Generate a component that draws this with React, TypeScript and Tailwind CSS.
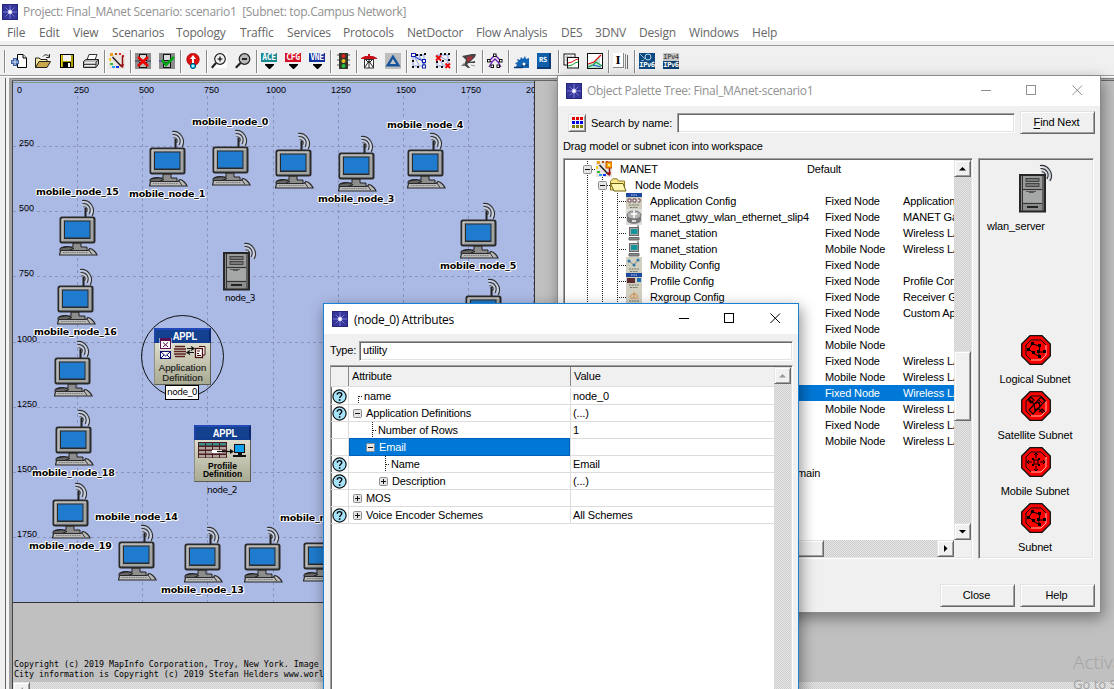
import React from 'react';

const SANS = "font-['Liberation_Sans',sans-serif] tracking-[-0.14px]";
const UI = "font-['Open_Sans','Noto_Sans',sans-serif]";
const DITHER = 'bg-[repeating-conic-gradient(#cdcdcd_0_25%,#e6e6e6_0_50%)] bg-[length:2px_2px]';
const RAISED = 'border border-t-[#e3e3e3] border-l-[#e3e3e3] border-r-[#696969] border-b-[#696969] bg-[#f0f0f0] shadow-[inset_1px_1px_0_#fff,inset_-1px_-1px_0_#a0a0a0]';
const SUNKEN = 'border border-t-[#a0a0a0] border-l-[#a0a0a0] border-r-white border-b-white shadow-[inset_1px_1px_0_#696969,inset_-1px_-1px_0_#e3e3e3]';

function AppIcon() {
  return (
    <svg width="16" height="16" viewBox="0 0 16 16" className="shrink-0">
      <rect width="16" height="16" fill="#26267c" />
      <rect x="1" y="1" width="14" height="14" fill="#35359a" />
      <path d="M8 1V15M1 8H15" stroke="#7d7dd0" strokeWidth="1" />
      <path d="M3.500 3.500L12.500 12.500M12.500 3.500L3.500 12.500" stroke="#7878c4" strokeWidth="1" />
      <circle cx="8" cy="8" r="2.400" fill="#b9b9f0" />
      <circle cx="8" cy="8" r="1.500" fill="#fff" />
    </svg>
  );
}

/* ---------- toolbar ---------- */
const toolIcons: Record<string, React.ReactNode> = {
  new: (
    <>
      <path d="M6.500 1.500H12L15.500 5V14.500H6.500Z" fill="#fff" stroke="#000" />
      <path d="M12 1.500V5H15.500" fill="#ddd" stroke="#000" />
      <path d="M2 5H6V7H8V11H6V13H2V11H0V7H2Z" fill="#3c64a8" />
      <path d="M4 6V12M1 9H7" stroke="#dfe8f8" strokeWidth="1" />
    </>
  ),
  open: (
    <>
      <path d="M.5 14.500V5H4L6 6.500H12V8" fill="#f8eca0" stroke="#222" />
      <path d="M.5 14.500L4 8.500H15.500L12 14.500Z" fill="#c8a848" stroke="#222" />
      <path d="M8 3.500C10 1 12 1.500 14 3.500M14.500 1V4.500H11" fill="none" stroke="#222" />
    </>
  ),
  save: (
    <>
      <rect x="1.500" y="1.500" width="13" height="13" fill="#b0a400" stroke="#000" />
      <rect x="4" y="2" width="8" height="6" fill="#f4f4f4" />
      <rect x="4" y="9" width="8" height="6" fill="#000" />
      <rect x="9" y="10" width="2" height="4" fill="#fff" />
      <path d="M2.500 2V14" stroke="#e6d800" />
    </>
  ),
  print: (
    <>
      <path d="M4 7L6 1.500H14L12 7Z" fill="#fff" stroke="#333" />
      <path d="M.5 8.500L3 6.500H15.500V11L13 14.500H.5Z" fill="#b8b8b8" stroke="#222" />
      <path d="M1 11.500H13M13 14V9L15 7" stroke="#444" fill="none" />
      <rect x="2" y="9" width="10" height="1" fill="#eee" />
      <rect x="2" y="12" width="10" height="1" fill="#eee" />
    </>
  ),
  dots: (
    <>
      <rect width="16" height="16" fill="#ece4e0" />
      <rect x="1" y="0" width="3" height="3" fill="#f0a020" /><rect x="6" y="0" width="2" height="2" fill="#a05000" />
      <rect x="10" y="0" width="2" height="2" fill="#e03020" /><rect x="13" y="2" width="2" height="2" fill="#c02020" /><rect x="0" y="5" width="2" height="3" fill="#f8d020" />
      <rect x="1" y="10" width="3" height="2" fill="#30c030" /><rect x="3" y="13" width="3" height="2" fill="#20a0f0" />
      <rect x="7" y="13" width="3" height="2" fill="#1030f0" />
      <path d="M3.500 4L13 14" stroke="#222" strokeWidth="1.500" /><path d="M13.500 3V12" stroke="#901010" strokeWidth="1.500" /><path d="M10 12L15 11L14 15Z" fill="#a01010" />
    </>
  ),
  fail: (
    <>
      <rect width="16" height="16" fill="#8c8c8c" />
      <path d="M0 8H4M12 8H16" stroke="#335" />
      <rect x="4.500" y="1.500" width="7" height="6" fill="#ddd" stroke="#111" /><rect x="4.500" y="9.500" width="7" height="5" fill="#bbb" stroke="#111" />
      <path d="M3 4L13 13M13 4L3 13" stroke="#f00000" strokeWidth="2.500" />
    </>
  ),
  ok: (
    <>
      <rect width="16" height="16" fill="#8c8c8c" />
      <path d="M0 8H4" stroke="#22c" />
      <rect x="4.500" y="1.500" width="7" height="6" fill="#ddd" stroke="#111" /><rect x="4.500" y="9.500" width="7" height="5" fill="#bbb" stroke="#111" />
      <path d="M3 7L7 12L15 4" fill="none" stroke="#00a818" strokeWidth="2.600" />
    </>
  ),
  up: (
    <>
      <circle cx="8" cy="6.500" r="6.300" fill="#dc1010" stroke="#900" strokeWidth=".6" />
      <path d="M8 2L11 6H9V10H7V6H5Z" fill="#fff" />
      <circle cx="8" cy="13" r="2.600" fill="#18c8f0" stroke="#064b7a" />
      <circle cx="8" cy="13" r="1" fill="#fff" />
    </>
  ),
  zin: (
    <>
      <rect x="3" y="0" width="13" height="15" fill="#fff" />
      <circle cx="9" cy="6" r="5.300" fill="#f2f2f2" stroke="#222" strokeWidth="1.200" />
      <path d="M6.500 6H11.500M9 3.500V8.500" stroke="#000" strokeWidth="1.200" />
      <path d="M5 10L.8 14.800" stroke="#222" strokeWidth="2.200" />
    </>
  ),
  zout: (
    <>
      <circle cx="9.500" cy="6" r="5.300" fill="#b8b8b8" stroke="#222" strokeWidth="1.200" />
      <path d="M7 6H12" stroke="#000" strokeWidth="1.600" />
      <path d="M5.500 10L.8 14.800" stroke="#222" strokeWidth="2.200" />
    </>
  ),
  light: (
    <>
      <rect x="4" y="0" width="9" height="16" fill="#35352c" />
      <path d="M2 2H4M2 7H4M2 12H4M13 2H15M13 7H15M13 12H15" stroke="#555" />
      <circle cx="8.500" cy="3" r="2" fill="#e02020" /><circle cx="8.500" cy="8" r="2" fill="#e8c020" /><circle cx="8.500" cy="13" r="2" fill="#20c040" />
    </>
  ),
  tent: (
    <>
      <path d="M0 5L4 3H7V1H9V3H12L16 5V6H0Z" fill="#c80f1c" />
      <rect x="3.500" y="6.500" width="9" height="8.500" fill="#fff" stroke="#333" />
      <path d="M4 14L8 8L12 14M8 6V15" stroke="#222" fill="none" />
      <path d="M5 7L8 10L11 7" stroke="#222" fill="none" />
    </>
  ),
  delta: (
    <>
      <rect width="16" height="16" fill="#bdbdbd" />
      <path d="M8 1.500L15.500 13.500H.5Z" fill="#16549c" /><path d="M8 6L11 11H5Z" fill="#c8c8c8" />
    </>
  ),
  net: (
    <>
      <path d="M2 2H13V13H2V2M2 2L13 8M3 3L8 12M8 2L13 13" fill="none" stroke="#8aa2e8" />
      <path d="M2 2L7 6L13 8V13" stroke="#1b2fc0" fill="none" />
      {[[5, 1], [9, 1], [13, 0], [1, 7], [1, 13], [6, 13]].map(([x, y]) => <rect key={x + '-' + y} x={x} y={y} width="2" height="2" fill="#111" />)}
      <rect x=".5" y=".5" width="4" height="3" fill="#fff" stroke="#1020b0" /><rect x="11.500" y="6.500" width="3" height="3" fill="#fff" stroke="#1020b0" /><rect x="11.500" y="12" width="3" height="3" fill="#fff" stroke="#1020b0" />
    </>
  ),
  netx: (
    <>
      <path d="M2 2H13V13H2V2M2 2L13 8M3 3L8 12" fill="none" stroke="#8aa2e8" />
      {[[5, 0], [9, 0], [13, 0], [1, 8], [7, 7], [13, 6], [1, 13], [6, 13]].map(([x, y]) => <rect key={x + '-' + y} x={x} y={y} width="2" height="2" fill="#111" />)}
      <path d="M1 2.500L6 7.500M6 2.500L1 7.500M10.500 10.500L15 15M15 10.500L10.500 15" stroke="#f00000" strokeWidth="1.800" />
    </>
  ),
  run: (
    <>
      <path d="M1 3L6 2L11 1H15L14 4L12 6L9 9L14 8V10L8 10L6 11L9 15H7L3 12L5 7Z" fill="#444" />
      <path d="M6 4L12 3L10 7L6 9Z" fill="#a8303a" /><path d="M0 13L3 10L4 13Z" fill="#777" />
      <path d="M10 12L14 13" stroke="#999" />
    </>
  ),
  graph: (
    <>
      <path d="M8 2L2 8L5 9L2 14M8 2L14 8L11 9L14 14M5 9L8 6L11 9" stroke="#6a1bb0" strokeWidth="1.300" fill="none" />
      {[[6.500, 1], [0.500, 6.500], [12.500, 6.500], [4, 12], [10, 12]].map(([x, y]) => <rect key={x + '-' + y} x={x} y={y} width="2.500" height="2.500" fill="#fff" stroke="#111" />)}
    </>
  ),
  gear: (
    <>
      <path d="M2 15L4 12L2 10L5 9L4 6L7 7L8 4L10 6L12 3L13 6L16 5V15Z" fill="#1464b4" />
      <path d="M1 14.500H9L10 12H15" stroke="#0c3c78" strokeWidth="1.500" fill="none" />
      <circle cx="11" cy="11" r="1.500" fill="#fff" />
    </>
  ),
  charts: (
    <>
      <rect x="1" y="1" width="11" height="11" fill="#fff" stroke="#111" /><path d="M1 4H12M1 7H12M4 1V12M8 1V12" stroke="#aaa" />
      <rect x="4.500" y="4.500" width="11" height="10.500" fill="#fff" stroke="#111" />
      <path d="M5 10L9 9L12 7L15 6" stroke="#e01010" fill="none" /><path d="M5 13L9 12L12 10L15 9" stroke="#18a030" fill="none" />
    </>
  ),
  chart: (
    <>
      <rect x=".5" y=".5" width="15" height="15" fill="#fff" stroke="#111" />
      <path d="M1 11L7 9L13 2V15H1Z" fill="#b8e8dc" /><path d="M1 11L7 9L14 2" stroke="#e01010" fill="none" strokeWidth="1.300" />
      <path d="M1 14L6 12L9 9L15 13" stroke="#1ba048" fill="none" strokeWidth="1.300" /><path d="M6 12L14 14" stroke="#1b50c0" />
    </>
  ),
};

function PixelTag({ text, color }: { text: string; color: string }) {
  return (
    <div className="flex w-4 flex-col items-center">
      <div className={`h-[9px] w-4 text-center font-['DejaVu_Sans_Mono',monospace] text-[8px] leading-[9px] font-bold tracking-[-0.3px] text-white ${color}`}>{text}</div>
      <svg width="11" height="7" viewBox="0 0 11 7"><path d="M1 2H10V3L6 7H5L1 3Z" fill="#000" /></svg>
    </div>
  );
}

function Tool({ name }: { name: string }) {
  let body: React.ReactNode;
  if (name === 'ace') body = <PixelTag text="ACE" color="bg-[#178a94]" />;
  else if (name === 'cfg') body = <PixelTag text="CFG" color="bg-[#d40f26]" />;
  else if (name === 'vne') body = <PixelTag text="VNE" color="bg-[#10329c]" />;
  else if (name === 'rs')
    body = <div className="h-4 w-[14px] border-r-2 border-b-2 border-[#0a3a74] bg-[#0f5fa8] text-center font-['DejaVu_Sans_Mono',monospace] text-[7px] leading-[14px] font-bold tracking-[-0.3px] text-white">RS</div>;
  else if (name === 'pages')
    body = <div className="flex h-4 w-4"><div className="h-[15px] w-[11px] border-r border-b border-[#888] bg-white text-center font-['Liberation_Serif',serif] text-[13px] leading-[13px] font-bold text-black">I</div><div className="mt-px h-[15px] w-[2px] border-r border-[#888]" /><div className="mt-[2px] h-[14px] w-[2px] border-r border-[#666]" /></div>;
  else if (name === 'ip6')
    body = (
      <div className="flex h-4 w-4 flex-col bg-[#0d4a80]">
        <svg width="16" height="8" viewBox="0 0 16 8"><circle cx="9" cy="4" r="3" fill="none" stroke="#b8d8f0" /><path d="M1 1L6 6M5 7L2 8" stroke="#8fb8dc" /></svg>
        <span className="text-center font-['DejaVu_Sans_Mono',monospace] text-[7px] leading-[8px] font-bold tracking-[-0.4px] text-white">IPv6</span>
      </div>
    );
  else if (name === 'ip46')
    body = (
      <div className="flex h-4 w-4 flex-col text-center font-['DejaVu_Sans_Mono',monospace] text-[7px] leading-[8px] font-bold tracking-[-0.4px]">
        <span className="bg-[#c6c6c6] text-[#555]">IPv4</span>
        <span className="bg-[#0d3e6c] text-white">IPv6</span>
      </div>
    );
  else body = <svg width="16" height="16" viewBox="0 0 16 16">{toolIcons[name]}</svg>;
  return <div className="flex w-6 shrink-0 justify-start">{body}</div>;
}

const toolGroups = [
  ['dots'], ['fail', 'ok'], ['up'], ['zin', 'zout'], ['ace', 'cfg', 'vne'], ['light'], ['tent', 'delta'],
  ['net', 'netx'], ['run'], ['graph'], ['gear', 'rs'], ['charts', 'chart'], ['pages'], ['ip6', 'ip46'],
];

function ToolSep() {
  return <div className="mr-[3px] h-[23px] w-[2px] shrink-0 border-l border-[#888] bg-white" />;
}

function Toolbar() {
  return (
    <div className="flex h-[29px] items-center bg-[#f0f0f0] pt-px pl-1">
      <ToolSep />
      <div className="-mr-[1px] flex w-24 pl-[2px]">
        {['new', 'open', 'save', 'print'].map((n) => <Tool key={n} name={n} />)}
      </div>
      {toolGroups.map((g, i) => (
        <div key={i} className="-mr-[3px] flex items-center">
          <ToolSep />
          {g.map((n) => <Tool key={n} name={n} />)}
        </div>
      ))}
    </div>
  );
}

const menus: [string, string][] = [
  ['File', 'w-8'], ['Edit', 'w-[34px]'], ['View', 'w-[39px]'], ['Scenarios', 'w-16'], ['Topology', 'w-16'], ['Traffic', 'w-[47px]'],
  ['Services', 'w-14'], ['Protocols', 'w-16'], ['NetDoctor', 'w-[69px]'], ['Flow Analysis', 'w-[85px]'], ['DES', 'w-[34px]'],
  ['3DNV', 'w-11'], ['Design', 'w-[50px]'], ['Windows', 'w-[63px]'], ['Help', 'w-10'],
];

/* ---------- network canvas ---------- */
function Waves() {
  return (
    <g fill="none">
      <path d="M2 1.500C9 .5 15 8 11 16.500M2.500 5C8 4 11 9 8.500 14.500M4 8C6.500 7.500 7.500 10 6.500 13" stroke="#ccd2de" strokeWidth="2.200" />
      <path d="M2 1C10 -.3 16.500 9 12 16.500M2.500 4C8.500 3.500 12 9 9 14.500M3.500 7.200C6.800 7 8 10 6.500 12.500" stroke="#303030" strokeWidth="1.100" />
    </g>
  );
}

function Computer() {
  return (
    <svg width="40" height="58" viewBox="0 0 40 58">
      <g transform="translate(21 .5)"><Waves /></g>
      <rect x="25.500" y="9" width="2" height="9" fill="#222" />
      <path d="M14 44H22V48H28V52H10V48H14Z" fill="#8d8d8d" stroke="#222" />
      <rect x="1.500" y="18.500" width="34" height="25" rx="1.500" fill="#a3a5a4" stroke="#2a2a2a" strokeWidth="2" />
      <path d="M3 42V20H34" fill="none" stroke="#d2d2d0" />
      <rect x="5" y="21.500" width="26.500" height="18.500" fill="#2a2a2a" />
      <rect x="6" y="22.500" width="24.500" height="16" fill="#1e7bcd" />
      <path d="M1 49.500C5 46.500 11 47.500 15 49.500L10 51.500H1Z" fill="#666" stroke="#222" />
      <path d="M1.500 51.500H29L31 49.500C34 50 37 53.500 38 56H.5Z" fill="#b9b9b9" stroke="#2a2a2a" strokeWidth="1.200" />
      <path d="M4 53.500H29" stroke="#7c7c7c" strokeDasharray="1.500 .8" />
      <path d="M30 51L33 55.500" stroke="#333" />
      <path d="M2 49L10 47.500" stroke="#222" />
    </svg>
  );
}

function Server() {
  return (
    <svg width="36" height="50" viewBox="0 0 36 50">
      <g transform="translate(19 .5)"><Waves /></g>
      <rect x="1" y="11" width="25" height="36.500" fill="#8b8d8c" stroke="#262626" strokeWidth="2" />
      <path d="M3.500 12V47M24 12V47" stroke="#333" />
      <rect x="4" y="12" width="19" height="12.500" fill="#999b9a" />
      <rect x="7" y="14.500" width="13" height="3" fill="#777" stroke="#333" strokeWidth=".8" />
      <rect x="7" y="19.500" width="13" height="3" fill="#777" stroke="#333" strokeWidth=".8" />
      <path d="M4 25.500H23M4 39.500H23" stroke="#333" />
      <rect x="4" y="26.500" width="19" height="12" fill="#a6a8a7" />
      <path d="M7 27.500H17M10 28.500H15" stroke="#444" strokeWidth=".8" />
      <rect x="8" y="42" width="11" height="2" fill="#222" />
    </svg>
  );
}

function ApplIcon({ kind }: { kind: 'app' | 'profile' }) {
  return (
    <div className="flex h-[57px] w-[57px] flex-col border border-[#8e8f80] border-r-[#5c5c50] border-b-[#5c5c50] bg-linear-to-b from-[#f0efe2] to-[#a9aa92]">
      <div className="-mx-px -mt-px h-[15px] shrink-0 border-2 border-t-[#2348b8] border-r-[#0c2870] border-b-[#123c90] border-l-[#1c44a8] bg-[#13418f] pl-1 text-center font-['Liberation_Sans_Narrow','Liberation_Sans',sans-serif] text-[11.500px] leading-[12px] font-bold tracking-[-0.2px] text-white"><span className="inline-block origin-center scale-x-[0.82]">APPL</span></div>
      {kind === 'app' ? (
        <svg width="55" height="22" viewBox="0 0 55 22" className="mt-[-5px] shrink-0">
          <g stroke="#fff" strokeWidth="3"><rect x="6" y="1" width="9" height="9" /></g>
          <rect x="5.500" y=".5" width="10" height="10" fill="#fff" stroke="#5a1050" /><rect x="5" y="0" width="11" height="3" fill="#5a1050" />
          <path d="M8 4.500L13 9M13 4.500L8 9" stroke="#5a1050" />
          <rect x="5.500" y="13.500" width="10" height="7" fill="#fff" stroke="#10107a" /><path d="M6 14L10.500 18L15 14M6 20L9 17M15 20L12 17" stroke="#10107a" fill="none" />
          <path d="M20 8.500H30M19 11H31M19 13.500H31M19 16H31M20 18.500H30" stroke="#5c2020" strokeWidth="1.700" />
          <path d="M32 10.500H39M36 8.500L39 10.500L36 12.500M39 14.500H32M35 12.500L32 14.500L35 16.500" stroke="#111" strokeWidth="1.200" fill="none" />
          <path d="M44 8.500H50V17H48" stroke="#4a1010" fill="#fff" /><rect x="40.500" y="10.500" width="7" height="9" fill="#fff" stroke="#4a1010" strokeWidth="1.300" />
          <path d="M42 13H45M42 15.500H44M42 17.500H46" stroke="#4a1010" />
        </svg>
      ) : (
        <svg width="55" height="22" viewBox="0 0 55 22" className="shrink-0">
          <rect x="3" y="2" width="29" height="16" fill="#4b1f22" />
          {[0, 1, 2, 3].map((r) => [0, 1, 2, 3].map((c) => <rect key={r + '-' + c} x={4 + c * 7} y={3 + r * 4} width="6" height="2.500" fill={r === 0 ? '#3c8c8c' : '#b0a29c'} />))}
          <rect x="17" y="10" width="10" height="3" fill="#fff" />
          <path d="M22 11.500H37" stroke="#111" strokeWidth="1.300" /><path d="M35 9L39 11.500L35 14Z" fill="#111" />
          <rect x="39.500" y="4.500" width="10" height="8" fill="#10a0f0" stroke="#111" /><path d="M43 13H47V15H51V17H38V15H43Z" fill="#111" />
        </svg>
      )}
      <div className={`text-center font-['Liberation_Sans',sans-serif] whitespace-nowrap ${kind === 'app' ? 'mt-[3px] text-[9.500px] leading-[10px] tracking-[0.1px] text-[#222] [-webkit-text-stroke:0.2px_#222]' : 'text-[8.500px] leading-[8px] font-bold text-black'}`}>
        {kind === 'app' ? 'Application' : 'Profiile'}<br />Definition
      </div>
    </div>
  );
}

const computers: [number, number][] = [
  [149, 130], [212, 129], [59, 199], [57, 268], [275, 132], [338, 135], [407, 132], [460, 202], [465, 278],
  [54, 340], [55, 409], [52, 482], [118, 524], [184, 526], [244, 526], [303, 525],
];

const labels: [string, number, number][] = [
  ['mobile_node_0', 192, 122], ['mobile_node_1', 129, 194], ['mobile_node_15', 36, 192], ['mobile_node_4', 387, 125],
  ['mobile_node_3', 318, 199], ['mobile_node_5', 440, 266], ['mobile_node_16', 34, 332], ['mobile_node_18', 32, 473],
  ['mobile_node_19', 29, 546], ['mobile_node_14', 95, 517], ['mobile_node_13', 161, 590], ['mobile_node_12', 280, 518],
];

const OX = 13;
const OY = 81;

function NetworkMap() {
  return (
    <div className="relative h-[522px] w-[522px] overflow-hidden border-r border-b border-[#333] bg-[#abb9e5]">
      <svg width="522" height="521" className="absolute top-0 left-0">
        <path d="M0 1.500H522" stroke="#7d9c80" />
        {[77, 142, 207, 273, 338, 403, 468, 533].map((x) => <path key={x} d={`M${x - OX + 0.5} 15V521`} stroke="#8a94b8" strokeDasharray="3 3" />)}
        {[146, 211, 276, 342, 407, 472, 537].map((y) => <path key={y} d={`M0 ${y - OY + 0.5}H522`} stroke="#8a94b8" strokeDasharray="3 3" />)}
        <circle cx="169.500" cy="275.500" r="41" fill="none" stroke="#111" />
      </svg>
      {([['0', 17], ['250', 74], ['500', 139], ['750', 204], ['1000', 266], ['1250', 331], ['1500', 396], ['1750', 461], ['2000', 526]] as [string, number][]).map(([t, x]) => (
        <span key={t} className="absolute top-[3px] font-['Liberation_Sans',sans-serif] text-[9px] leading-[12px] text-black" style={{ left: x - OX }}>{t}</span>
      ))}
      {([['250', 143], ['500', 208], ['750', 273], ['1000', 339], ['1250', 404], ['1500', 469], ['1750', 534]] as [string, number][]).map(([t, y]) => (
        <span key={t} className="absolute font-['Liberation_Sans',sans-serif] text-[9px] leading-[12px] text-black" style={{ left: t.length > 3 ? 4 : 6, top: y - OY - 6 }}>{t}</span>
      ))}
      {computers.map(([x, y]) => (
        <div key={x} className="absolute" style={{ left: x - OX, top: y - OY }}><Computer /></div>
      ))}
      <div className="absolute top-[161px] left-[210px]"><Server /></div>
      <div className="absolute top-[247px] left-[141px]"><ApplIcon kind="app" /></div>
      <div className="absolute top-[344px] left-[181px]"><ApplIcon kind="profile" /></div>
      <span className="absolute top-[211px] left-[212px] font-['DejaVu_Sans',sans-serif] text-[9px] leading-[12px] tracking-[-0.45px] text-black">node_3</span>
      <span className="absolute top-[403px] left-[194px] font-['DejaVu_Sans',sans-serif] text-[9px] leading-[12px] tracking-[-0.45px] text-black">node_2</span>
      <span className="absolute top-[304px] left-[152px] h-[15px] w-[34px] border border-black bg-white text-center font-['DejaVu_Sans',sans-serif] text-[9px] leading-[13px] tracking-[-0.45px] text-black">node_0</span>
      {labels.map(([t, x, y]) => (
        <span key={t} className="absolute font-['DejaVu_Sans',sans-serif] text-[9.500px] leading-[14px] font-bold tracking-[-0.2px] whitespace-nowrap text-black [text-shadow:1px_0_#fff,-1px_0_#fff,0_1px_#fff,0_-1px_#fff,1px_1px_#fff,-1px_-1px_#fff]" style={{ left: x - OX, top: y - OY - 7 }}>{t}</span>
      ))}
    </div>
  );
}

/* ---------- windows ---------- */
function Caption({ title, active }: { title: string; active: boolean }) {
  return (
    <div className="flex h-[30px] shrink-0 items-center bg-white pr-[17px] pl-2">
      <AppIcon />
      <span className={`flex-1 ${UI} text-[12px] leading-[16px] whitespace-pre ${active ? 'ml-[6px] pt-px tracking-[-0.35px] text-black' : 'ml-[5px] tracking-[-0.31px] text-[#919191]'}`}>{title}</span>
      <svg width="103" height="12" viewBox="0 0 103 12" fill="none" stroke={active ? '#000' : '#919191'}>
        <path d="M1 5.500H11" />
        <rect x="46.500" y=".5" width="9" height="9" />
        <path d="M92.500 .5L102 10M102 .5L92.500 10" />
      </svg>
    </div>
  );
}

function Expander({ open }: { open: boolean }) {
  return (
    <svg width="9" height="9" viewBox="0 0 9 9" className="shrink-0">
      <rect x=".5" y=".5" width="8" height="8" rx="1" fill="#e4e4e4" stroke="#8c8c8c" />
      <path d="M2 4.500H7" stroke="#111" />
      {!open && <path d="M4.500 2V7" stroke="#111" />}
    </svg>
  );
}

function ScrollButton({ dir, dim }: { dir: 'up' | 'down' | 'left' | 'right'; dim?: boolean }) {
  const d = { up: 'M4.500 3L8 6.500H1Z', down: 'M1 3H8L4.500 6.500Z', left: 'M6 1V8L2.500 4.500Z', right: 'M3 1V8L6.500 4.500Z' }[dir];
  return (
    <div className={`flex h-[17px] w-[17px] shrink-0 items-center justify-center ${RAISED}`}>
      <svg width="9" height="9" viewBox="0 0 9 9"><path d={d} fill={dim ? '#999' : '#000'} /></svg>
    </div>
  );
}

function Button({ children }: { children: React.ReactNode }) {
  return <button className={`h-[23px] w-[75px] shrink-0 pr-[2px] ${RAISED} ${SANS} text-[11px] leading-[19px] text-black`}>{children}</button>;
}

type TreeRow = { icon?: string; name?: string; type?: string; desc?: string; selected?: boolean };
const treeRows: TreeRow[] = [
  { icon: 'appl', name: 'Application Config', type: 'Fixed Node', desc: 'Application Config' },
  { icon: 'gtwy', name: 'manet_gtwy_wlan_ethernet_slip4', type: 'Fixed Node', desc: 'MANET Gateway' },
  { icon: 'station', name: 'manet_station', type: 'Fixed Node', desc: 'Wireless LAN' },
  { icon: 'station', name: 'manet_station', type: 'Mobile Node', desc: 'Wireless LAN' },
  { icon: 'mobility', name: 'Mobility Config', type: 'Fixed Node' },
  { icon: 'prof', name: 'Profile Config', type: 'Fixed Node', desc: 'Profile Config' },
  { icon: 'rx', name: 'Rxgroup Config', type: 'Fixed Node', desc: 'Receiver Group' },
  { type: 'Fixed Node', desc: 'Custom Application' },
  { type: 'Fixed Node' },
  { type: 'Mobile Node' },
  { type: 'Fixed Node', desc: 'Wireless LAN' },
  { type: 'Mobile Node', desc: 'Wireless LAN' },
  { type: 'Fixed Node', desc: 'Wireless LAN', selected: true },
  { type: 'Mobile Node', desc: 'Wireless LAN' },
  { type: 'Fixed Node', desc: 'Wireless LAN' },
  { type: 'Mobile Node', desc: 'Wireless LAN' },
];

function TreeIcon({ kind }: { kind?: string }) {
  if (!kind) return <div className="w-4 shrink-0" />;
  if (kind === 'station')
    return (
      <svg width="16" height="16" viewBox="0 0 16 16" className="shrink-0">
        <rect x="3.500" y="2.500" width="9" height="8" fill="#a9a9a9" stroke="#666" /><rect x="5" y="4" width="6.500" height="5" fill="#15949c" />
        <path d="M3 12.500H13V15H3Z" fill="#888" stroke="#666" /><path d="M12 0V2" stroke="#555" />
      </svg>
    );
  if (kind === 'gtwy')
    return (
      <svg width="16" height="16" viewBox="0 0 16 16" className="shrink-0">
        <rect width="16" height="16" fill="#dcdcd8" /><path d="M1 5V11C1 16 15 16 15 11V5Z" fill="#777" /><ellipse cx="8" cy="6" rx="7" ry="4" fill="#b4b4b4" stroke="#777" />
        <path d="M8 1V9M5 5H11M6 12H10" stroke="#fff" strokeWidth="1.500" />
      </svg>
    );
  return (
    <svg width="16" height="16" viewBox="0 0 16 16" className="shrink-0">
      <rect width="16" height="16" fill="#d0cfc0" />
      {(kind === 'appl' || kind === 'prof') && <><rect width="16" height="4" fill="#1d48a0" /><path d="M5 2H11" stroke="#c8d4f0" strokeDasharray="1.500 .8" /></>}
      {kind === 'appl' && <path d="M2 6H5V9H2ZM7 6H10V9H7ZM12 6H14V9H12" stroke="#6d4050" fill="#fff" />}
      {kind === 'prof' && <><rect x="1" y="5" width="8" height="5" fill="#5b2d30" /><rect x="11" y="5" width="4" height="4" fill="#1b6fb0" /></>}
      {kind === 'mobility' && <><path d="M3 4L8 8L12 3" stroke="#888" fill="none" /><circle cx="3" cy="4" r="1.500" fill="#2878a8" /><circle cx="8" cy="8" r="1.500" fill="#2878a8" /><circle cx="12" cy="3" r="1.500" fill="#2878a8" /></>}
      {kind === 'rx' && <path d="M4 8C5 4 11 4 12 8M8 3V8M4 9L12 9" stroke="#d88a40" fill="none" />}
      <path d="M3 12H13M4 14.500H12" stroke="#777767" strokeDasharray="2 .7" />
    </svg>
  );
}

function Subnet({ kind, name }: { kind: 'net' | 'sat' | 'mob'; name: string }) {
  return (
    <div className="flex h-14 shrink-0 flex-col items-center">
      <svg width="30" height="30" viewBox="0 0 30 30" className="shrink-0">
        <path d="M9 .7H21L29.300 9V21L21 29.300H9L.7 21V9Z" fill="#fb0000" stroke="#111" strokeWidth="1.300" />
        <path d="M5 20V10L10 5H20" fill="none" stroke="#111" /><path d="M25 10V20L20 25H10" fill="none" stroke="#ffb8b0" /><path d="M20 5L25 10M5 20L10 25" stroke="#111" />
        {kind === 'net' && <><path d="M11 9L19 11L18 17H23M17 17L19 22L12 18L8 14L11 9" stroke="#000" fill="none" /><path d="M10 7h3v3h-3zM17 9h3v3h-3zM22 15h3v3h-3zM16 15h3v3h-3zM17 20h3v3h-3zM11 16h3v3h-3zM6 13h3v3h-3z" fill="#000" /></>}
        {kind === 'sat' && <><path d="M8 8L13 13M17 17L22 22M20 6L24 10L12 23L8 19ZM13 13L18 11L19 16L14 19ZM7 9L10 6L13 9L10 12ZM18 21L21 18L24 21" stroke="#000" fill="none" strokeWidth="1.200" /><path d="M15 10L20 15M17 8L22 13" stroke="#000" /></>}
        {kind === 'mob' && <><path d="M15 6V11M15 19V24M6 15H11M19 15H24M13 8L15 6L17 8M13 22L15 24L17 22M8 13L6 15L8 17M22 13L24 15L22 17M11 11L19 19M19 11L11 19" stroke="#000" fill="none" /><rect x="13" y="13" width="4" height="4" fill="#fb0000" stroke="#000" /><path d="M11 11h2v2h-2zM17 11h2v2h-2zM11 17h2v2h-2zM17 17h2v2h-2z" fill="#000" /></>}
      </svg>
      <span className="mt-[7px] mr-[2px] text-[11px] leading-[14px]">{name}</span>
    </div>
  );
}

function PaletteWindow() {
  return (
    <div className={`absolute top-[75px] left-[557px] flex h-[538px] w-[544px] flex-col border border-[#8a8a8a] bg-[#f0f0f0] shadow-[2px_5px_14px_rgba(0,0,0,0.4)] ${SANS} text-[11px] text-black`}>
      <Caption title="Object Palette Tree: Final_MAnet-scenario1" active={false} />
      <div className="flex h-[34px] shrink-0 items-center pr-[5px] pl-[10px]">
        <div className={`flex h-[18px] w-[18px] items-center justify-center ${RAISED}`}>
          <svg width="12" height="12" viewBox="0 0 12 12">
            {['#e00000', '#0000e0', '#808000'].map((c, r) => [0, 1, 2].map((k) => <rect key={c + k} x={1 + k * 4} y={r * 4} width="3" height="3" fill={c} shapeRendering="crispEdges" />))}
          </svg>
        </div>
        <span className="ml-[5px] w-[86px]">Search by name:</span>
        <div className={`h-[20px] w-[338px] bg-white ${SUNKEN}`} />
        <div className="ml-[5px] pb-px"><Button><span className="underline underline-offset-2">F</span>ind Next</Button></div>
      </div>
      <div className="flex h-[18px] shrink-0 items-center pb-[5px] pl-[5px]">Drag model or subnet icon into workspace</div>
      <div className="flex flex-1 gap-[5px] px-[5px]">
        <div className={`flex h-[401px] w-[410px] shrink-0 flex-col bg-white p-px ${SUNKEN}`}>
          <div className="flex h-[380px] shrink-0">
            <div className="relative w-[389px] shrink-0 overflow-hidden pt-px">
              <svg width="70" height="380" className="absolute top-px left-px" stroke="#222" strokeDasharray="1 1">
                <path d="M21.500 0V380M36.500 16V380M51.500 32V380M26 8.500H32M41 24.500H46" />
              </svg>
              <div className="relative flex h-4 items-center pl-[18px]">
                <Expander open />
                <svg width="16" height="16" viewBox="0 0 16 16" className="ml-1"><g>{toolIcons.dots}</g><rect x="10" y="1" width="6" height="6" fill="#ffa800" stroke="#c05000" /><rect x="12" y="3" width="2" height="2" fill="#fff0a0" /></svg>
                <span className="ml-2 w-[187px] leading-4">MANET</span>
                <span className="leading-4">Default</span>
              </div>
              <div className="relative flex h-4 items-center pl-[33px]">
                <Expander open />
                <svg width="17" height="14" viewBox="0 0 17 14" className="ml-[3px]"><path d="M.5 12V3L3 .8H7L8.500 3H14.500V12Z" fill="#f7e88c" stroke="#8a7a20" /><path d="M.5 5.500H13L16 13H4Z" fill="#fff6b0" stroke="#6a6010" /></svg>
                <span className="ml-2 leading-4">Node Models</span>
              </div>
              {treeRows.map((r, i) => (
                <div key={i} className={`relative flex h-4 items-center pl-[54px] leading-4 whitespace-nowrap ${r.selected ? 'bg-[#0078d7] text-white' : ''}`}>
                  <div className="w-[7px] shrink-0 border-t border-dotted border-[#222]" />
                  <TreeIcon kind={r.icon} />
                  <span className="ml-2 w-[175px] shrink-0">{r.name}</span>
                  <span className="w-[78px] shrink-0">{r.type}</span>
                  <span>{r.desc}</span>
                </div>
              ))}
              <div className="mt-4 h-4 pl-[220px] leading-4">domain</div>
            </div>
            <div className={`flex w-[17px] flex-col ${DITHER}`}>
              <ScrollButton dir="up" />
              <div className={`mt-[174px] h-[70px] w-[17px] ${RAISED}`} />
              <div className="mt-auto"><ScrollButton dir="down" /></div>
            </div>
          </div>
          <div className="flex h-[17px] shrink-0">
            <div className={`flex w-[389px] ${DITHER}`}>
              <ScrollButton dir="left" />
              <div className={`h-[17px] w-[242px] ${RAISED}`} />
              <div className="ml-auto"><ScrollButton dir="right" /></div>
            </div>
            <div className="flex-1 bg-[#f0f0f0]" />
          </div>
        </div>
        <div className={`flex h-[401px] w-[116px] shrink-0 flex-col ${SUNKEN}`}>
          <div className="flex h-[176px] shrink-0 flex-col pt-[5px]">
            <div className="ml-10"><Server /></div>
            <span className="mt-[5px] ml-2 leading-[14px]">wlan_server</span>
          </div>
          <Subnet kind="net" name="Logical Subnet" />
          <Subnet kind="sat" name="Satellite Subnet" />
          <Subnet kind="mob" name="Mobile Subnet" />
          <Subnet kind="net" name="Subnet" />
        </div>
      </div>
      <div className="flex h-[28px] justify-end gap-[5px] pr-[5px]"><Button>Close</Button><Button>Help</Button></div>
    </div>
  );
}

type AttrRow = { help?: boolean; pad: string; box?: 'open' | 'closed'; name: string; value: string; selected?: boolean };
const attrs: AttrRow[] = [
  { help: true, pad: 'pl-[9px]', name: 'name', value: 'node_0' },
  { help: true, pad: 'pl-1', box: 'open', name: 'Application Definitions', value: '(...)' },
  { pad: 'pl-[23px]', name: 'Number of Rows', value: '1' },
  { pad: 'pl-[17px]', box: 'open', name: 'Email', value: '', selected: true },
  { help: true, pad: 'pl-[36px]', name: 'Name', value: 'Email' },
  { help: true, pad: 'pl-[30px]', box: 'closed', name: 'Description', value: '(...)' },
  { pad: 'pl-1', box: 'closed', name: 'MOS', value: '' },
  { help: true, pad: 'pl-1', box: 'closed', name: 'Voice Encoder Schemes', value: 'All Schemes' },
];

function HelpIcon() {
  return (
    <svg width="15" height="15" viewBox="0 0 15 15" className="shrink-0">
      <circle cx="7.500" cy="7.500" r="6.600" fill="#a6e4fa" stroke="#111" strokeWidth="1.200" />
      <path d="M5.300 5.800C5.300 3 9.800 3 9.800 5.600C9.800 7.200 7.600 7.200 7.600 9" fill="none" stroke="#000" strokeWidth="1.400" />
      <rect x="6.800" y="10.200" width="1.600" height="1.600" fill="#000" />
    </svg>
  );
}

function AttributesWindow() {
  return (
    <div className={`absolute top-[303px] left-[323px] flex h-[400px] w-[476px] flex-col border border-[#1b7fd4] bg-[#f0f0f0] shadow-[2px_5px_14px_rgba(0,0,0,0.45)] ${SANS} text-[11px] text-black`}>
      <Caption title="(node_0) Attributes" active />
      <div className="flex h-[31px] shrink-0 items-center pt-[2px] pl-[6px]">
        <span className="w-[29px]">Type:</span>
        <div className={`h-[20px] w-[434px] bg-white pl-[3px] leading-[17px] ${SUNKEN}`}>utility</div>
      </div>
      <div className={`ml-[6px] flex w-[463px] flex-1 bg-white pt-px ${SUNKEN}`}>
        <div className="flex flex-1 flex-col">
          <div className="flex h-[20px] shrink-0 border-b border-[#ddd] bg-[#f0f0f0] leading-[19px]">
            <div className="w-[18px] border-r border-[#888]" />
            <div className="w-[222px] border-r border-[#888] pl-[3px]">Attribute</div>
            <div className="pl-[3px]">Value</div>
          </div>
          {attrs.map((a, i) => (
            <div key={a.name} className={`flex h-[17px] shrink-0 leading-[17px] ${i === 0 ? 'mt-px' : ''}`}>
              <div className="flex w-[18px] items-center justify-center border-r border-b border-[#dcdcdc]">{a.help && <HelpIcon />}</div>
              <div className="w-[222px] border-r border-b border-[#dcdcdc]">
                <div className={`flex h-4 items-center ${a.pad} ${a.selected ? 'ml-px w-[219px] bg-[#0078d7] pl-4! text-white outline outline-1 outline-[#0060b8]' : ''}`}>
                  {a.box ? <Expander open={a.box === 'open'} /> : (
                    <svg width="4" height="16" stroke="#222" strokeDasharray="1 1" className="shrink-0"><path d={i === 0 ? 'M.5 8V16M1 8.500H4' : 'M.5 0V16M1 8.500H4'} /></svg>
                  )}
                  <span className={a.box ? 'ml-1' : 'ml-[2px]'}>{a.name}</span>
                </div>
              </div>
              <div className="flex-1 border-b border-[#dcdcdc] pl-[2px]">{a.value}</div>
            </div>
          ))}
        </div>
        <div className={`mr-px w-[17px] shrink-0 ${DITHER}`}><ScrollButton dir="up" dim /></div>
      </div>
    </div>
  );
}

export default function App() {
  return (
    <div className="relative flex h-[689px] w-[1114px] flex-col overflow-hidden bg-[#c0c0c0]">
      <div className={`flex h-[23px] items-center bg-white pl-[2px] ${UI} text-[12px]`}>
        <AppIcon />
        <span className="ml-[5px] pt-px tracking-[-0.3px] whitespace-pre text-[#919191]">Project: Final_MAnet Scenario: scenario1  [Subnet: top.Campus Network]</span>
      </div>
      <nav className={`flex h-[18px] items-center bg-white pt-[2px] pl-[7px] ${UI} text-[12px] tracking-[-0.2px] text-[#666]`}>
        {menus.map(([m, w]) => <span key={m} className={`${w} shrink-0 whitespace-nowrap`}>{m}</span>)}
      </nav>
      <div className="h-[5px] border-b border-[#9a9a9a] bg-[#f0f0f0]" />
      <Toolbar />
      <div className="h-[3px] border-t border-b border-t-[#9a9a9a] border-b-[#e8e8e8] bg-white" />
      <div className="flex flex-1">
        <div className="w-[5px] bg-[#f0f0f0]" />
        <div className="w-[4px] border-l border-[#666] bg-[#f4f4f4]" />
        <div className="w-[3px] bg-[#a0a0a0]" />
        <div className="flex flex-1 flex-col">
          <div className="h-[3px] border-t border-b border-t-[#888] border-b-[#666] bg-[#aaa]" />
          <div className="flex flex-1 flex-col border-l border-[#444]">
            <NetworkMap />
            <div className="mt-[56px] pl-px font-['DejaVu_Sans_Mono',monospace] text-[8.300px] leading-[10px] whitespace-pre text-black">
              <div>Copyright (c) 2019 MapInfo Corporation, Troy, New York. Image</div>
              <div>City information is Copyright (c) 2019 Stefan Helders www.world-gazetteer.com</div>
            </div>
            <div className={`mt-auto flex h-[7px] overflow-hidden ${DITHER}`}><ScrollButton dir="left" dim /></div>
          </div>
        </div>
      </div>
      <div className={`absolute top-[649px] left-[1073px] ${UI} text-[#a3a3a3]`}>
        <div className="text-[19px] leading-[26px] font-light whitespace-nowrap">Activate Windows</div>
        <div className="text-[13px] leading-[18px] whitespace-nowrap">Go to Settings</div>
      </div>
      <PaletteWindow />
      <AttributesWindow />
    </div>
  );
}
